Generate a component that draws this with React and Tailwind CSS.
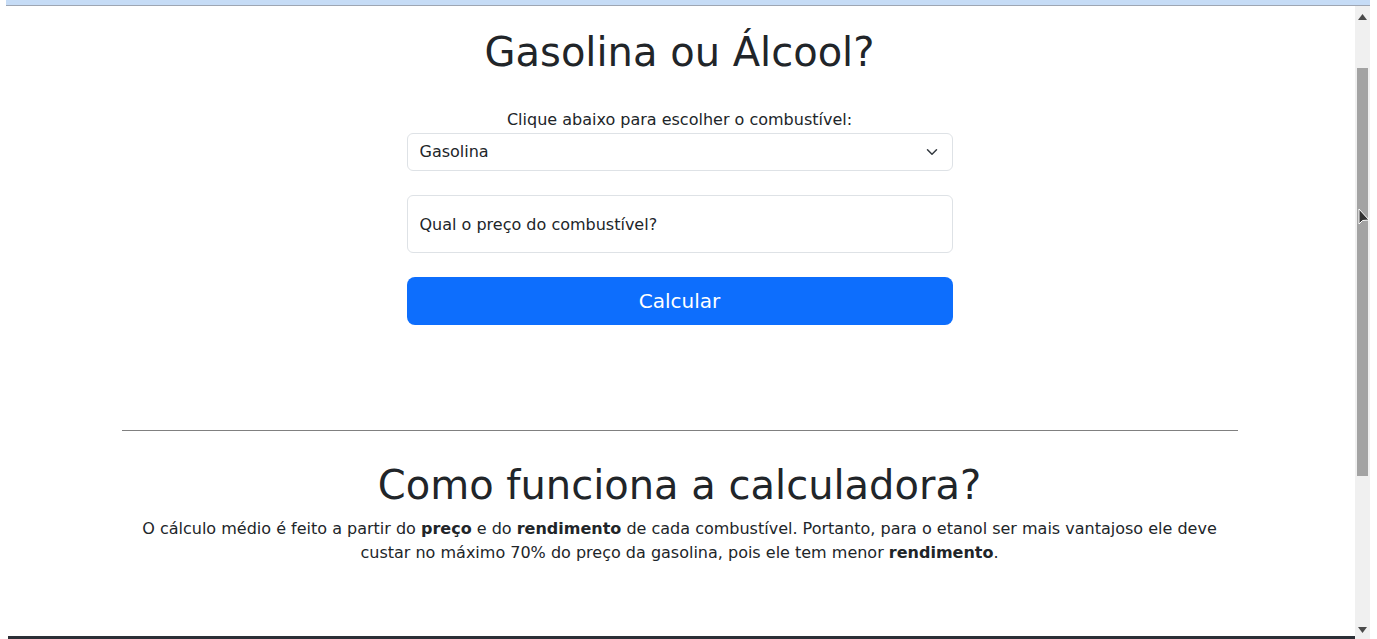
import React, { useState } from 'react'

const font = { fontFamily: '"DejaVu Sans", sans-serif' }

const Scrollbar = () => (
  <div className='w-[15px] bg-[#f0f0f0] flex flex-col items-center relative'>
    <svg width='9' height='6' viewBox='0 0 9 6' className='mt-[8px]'>
      <polygon points='4.5,0 9,6 0,6' fill='#4a4a4a' />
    </svg>
    <div className='mt-[48px] w-[11px] h-[408px] bg-[#a3a3a3]'></div>
    <div className='flex-1'></div>
    <svg width='9' height='6' viewBox='0 0 9 6' className='mb-[6px]'>
      <polygon points='0,0 9,0 4.5,6' fill='#4a4a4a' />
    </svg>
  </div>
)

const App = () => {
  const [fuel, setFuel] = useState('Gasolina')
  const [price, setPrice] = useState('')

  return (
    <div className='w-[1377px] h-[639px] bg-white overflow-hidden flex flex-col relative text-[#212529]' style={font}>
      {/* browser strip */}
      <div className='h-[6px] ml-[6px] mr-[7px] bg-[#c6dcf6] border-b border-[#9ea6b3]'></div>

      <div className='flex flex-1 min-h-0'>
        <div className='flex-1 flex flex-col'>
          <div className='flex-1 flex flex-col items-center pl-[4px]'>
            <h1 className='mt-[22px] text-[40px] leading-[48px] font-normal'>Gasolina ou Álcool?</h1>

            <div className='mt-[32px] w-[546px] flex flex-col'>
              <label className='text-center text-base leading-6 mb-px'>Clique abaixo para escolher o combustível:</label>
              <div className='relative'>
                <select
                  value={fuel}
                  onChange={(e) => setFuel(e.target.value)}
                  className='appearance-none w-full h-[38px] pl-3 pr-9 border border-[#dee2e6] rounded-md bg-white text-base text-[#212529] focus:outline-none'
                  style={font}
                >
                  <option>Gasolina</option>
                  <option>Álcool</option>
                </select>
                <svg className='absolute right-[13px] top-[13px] pointer-events-none' width='16' height='12' viewBox='0 0 16 16'>
                  <path d='m2 5 6 6 6-6' fill='none' stroke='#343a40' strokeWidth='2' strokeLinecap='round' strokeLinejoin='round' />
                </svg>
              </div>

              <input
                value={price}
                onChange={(e) => setPrice(e.target.value)}
                placeholder='Qual o preço do combustível?'
                className='mt-6 h-[58px] w-full px-3 border border-[#dee2e6] rounded-md bg-white text-base placeholder-[#212529] focus:outline-none'
                style={font}
              />

              <button className='mt-6 h-[48px] w-full rounded-lg bg-[#0d6efd] text-white text-xl' style={font}>
                Calcular
              </button>
            </div>

            <div className='mt-[105px] w-[1116px] border-t border-[#808080]'></div>

            <h2 className='mt-[30px] text-[40px] leading-[48px] font-normal'>Como funciona a calculadora?</h2>
            <p className='mt-[8px] w-[1116px] px-3 text-center text-base leading-6'>
              O cálculo médio é feito a partir do <b>preço</b> e do <b>rendimento</b> de cada combustível. Portanto, para o etanol ser mais vantajoso ele deve custar no máximo 70% do preço da gasolina, pois ele tem menor <b>rendimento</b>.
            </p>
          </div>
          <div className='h-[3px] ml-[8px] bg-[#2b2f36]'></div>
        </div>
        <Scrollbar />
        <div className='w-[7px]'></div>
      </div>

      {/* mouse cursor */}
      <svg className='absolute left-[1358px] top-[208px]' width='12' height='20' viewBox='0 0 12 20'>
        <polygon points='1,1 1,16 4.5,12.5 11,12' fill='#333' stroke='#fff' strokeWidth='1' />
      </svg>
    </div>
  )
}

export default App
